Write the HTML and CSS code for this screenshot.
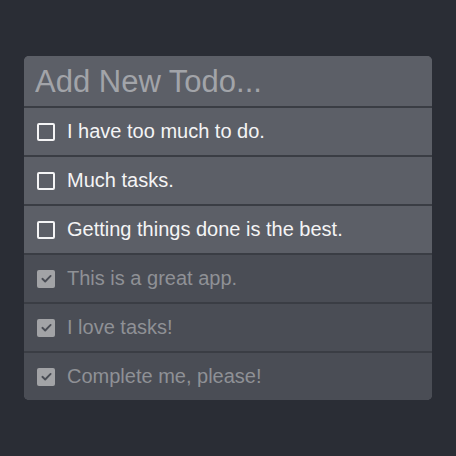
FILE: index.html
```html
<!DOCTYPE html>
<html lang="en">
<head>
<meta charset="utf-8">
<title>Todos</title>
<link rel="stylesheet" href="styles.css">
</head>
<body>
<main class="card">
  <input class="new-todo" type="text" placeholder="Add New Todo...">
  <ul class="list">
    <li class="item"><span class="box"></span><span class="label">I have too much to do.</span></li>
    <li class="item"><span class="box"></span><span class="label">Much tasks.</span></li>
    <li class="item"><span class="box"></span><span class="label">Getting things done is the best.</span></li>
    <li class="item done"><span class="box"><svg viewBox="0 0 16 16" class="check"><path d="M3.6 8.3 L6.6 11.2 L12.4 5.2" fill="none" stroke="currentColor" stroke-width="2" stroke-linecap="round" stroke-linejoin="round"/></svg></span><span class="label">This is a great app.</span></li>
    <li class="item done"><span class="box"><svg viewBox="0 0 16 16" class="check"><path d="M3.6 8.3 L6.6 11.2 L12.4 5.2" fill="none" stroke="currentColor" stroke-width="2" stroke-linecap="round" stroke-linejoin="round"/></svg></span><span class="label">I love tasks!</span></li>
    <li class="item done"><span class="box"><svg viewBox="0 0 16 16" class="check"><path d="M3.6 8.3 L6.6 11.2 L12.4 5.2" fill="none" stroke="currentColor" stroke-width="2" stroke-linecap="round" stroke-linejoin="round"/></svg></span><span class="label">Complete me, please!</span></li>
  </ul>
</main>
</body>
</html>
```

FILE: styles.css
```css
html, body {
  margin: 0;
  background: #2a2d35;
}
body {
  padding: 56px 24px;
  font-family: "Liberation Sans", Arial, sans-serif;
}
.card {
  display: flex;
  flex-direction: column;
  border-radius: 5px;
  overflow: hidden;
  background: #5c5f67;
}
.new-todo {
  display: block;
  box-sizing: border-box;
  width: 100%;
  height: 50px;
  margin: 0;
  padding: 2px 11px 0;
  border: 0;
  outline: none;
  background: #5c5f67;
  font-family: inherit;
  font-size: 31px;
  color: #f0f0f0;
}
.new-todo::placeholder {
  color: #a2a4a9;
  opacity: 1;
}
.list {
  list-style: none;
  margin: 0;
  padding: 0;
}
.item {
  display: flex;
  align-items: center;
  gap: 12px;
  height: 47px;
  padding: 0 13px;
  border-top: 2px solid #3a3d44;
  background: #5c5f67;
  color: #f4f4f5;
  font-size: 20px;
}
.box {
  box-sizing: border-box;
  flex: none;
  width: 18px;
  height: 18px;
  border: 2px solid #f4f4f5;
  border-radius: 2px;
  display: flex;
  align-items: center;
  justify-content: center;
}
.item.done {
  background: #4a4d55;
  color: #8f9196;
}
.item.done .box {
  border: 0;
  background: #a2a3a6;
  color: #4a4d55;
}
.check {
  width: 15px;
  height: 15px;
}
```
